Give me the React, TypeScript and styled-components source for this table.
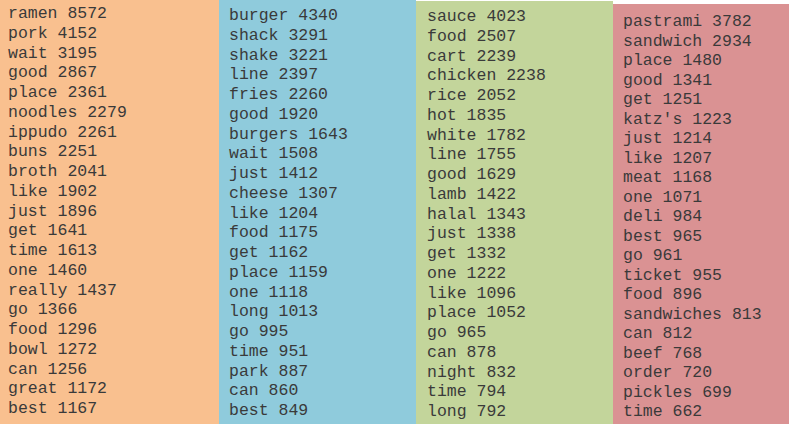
import * as React from 'react'
import styled, { createGlobalStyle } from 'styled-components'

const GlobalStyle = createGlobalStyle`
    html, body {
        margin: 0;
        padding: 0;
        background: #ffffff;
    }
`;

export const Board = styled.div`
    display: flex;
    align-items: stretch;
    height: 424px;
    width: 789px;
    overflow: hidden;
`;

export const Column = styled.div<{ $bg: string; $width: number; $top: number; $padTop: number; $padLeft: number; $lh: number }>`
    flex: 0 0 ${p => p.$width}px;
    margin-top: ${p => p.$top}px;
    padding: ${p => p.$padTop}px 0 0 ${p => p.$padLeft}px;
    box-sizing: border-box;
    background: ${p => p.$bg};
    color: #3a3a3a;
    font-family: "Liberation Mono", "Courier New", monospace;
    font-size: 16.5px;
    line-height: ${p => p.$lh}px;
`;

export const Word = styled.div`
    white-space: nowrap;
`;

const columns = [
    {
        bg: '#f9c08f', width: 219, top: 0, padTop: 4, padLeft: 8, lh: 19.75,
        words: ['ramen 8572', 'pork 4152', 'wait 3195', 'good 2867', 'place 2361', 'noodles 2279', 'ippudo 2261', 'buns 2251', 'broth 2041', 'like 1902', 'just 1896', 'get 1641', 'time 1613', 'one 1460', 'really 1437', 'go 1366', 'food 1296', 'bowl 1272', 'can 1256', 'great 1172', 'best 1167'],
    },
    {
        bg: '#8fcbdc', width: 197, top: 0, padTop: 6, padLeft: 10, lh: 19.75,
        words: ['burger 4340', 'shack 3291', 'shake 3221', 'line 2397', 'fries 2260', 'good 1920', 'burgers 1643', 'wait 1508', 'just 1412', 'cheese 1307', 'like 1204', 'food 1175', 'get 1162', 'place 1159', 'one 1118', 'long 1013', 'go 995', 'time 951', 'park 887', 'can 860', 'best 849'],
    },
    {
        bg: '#c3d59b', width: 197, top: 1, padTop: 6, padLeft: 11, lh: 19.75,
        words: ['sauce 4023', 'food 2507', 'cart 2239', 'chicken 2238', 'rice 2052', 'hot 1835', 'white 1782', 'line 1755', 'good 1629', 'lamb 1422', 'halal 1343', 'just 1338', 'get 1332', 'one 1222', 'like 1096', 'place 1052', 'go 965', 'can 878', 'night 832', 'time 794', 'long 792'],
    },
    {
        bg: '#da9293', width: 190, top: 4, padTop: 8, padLeft: 10, lh: 19.5,
        words: ['pastrami 3782', 'sandwich 2934', 'place 1480', 'good 1341', 'get 1251', "katz's 1223", 'just 1214', 'like 1207', 'meat 1168', 'one 1071', 'deli 984', 'best 965', 'go 961', 'ticket 955', 'food 896', 'sandwiches 813', 'can 812', 'beef 768', 'order 720', 'pickles 699', 'time 662'],
    },
];

export default function App() {
    return (
        <>
            <GlobalStyle />
            <Board>
                {columns.map((c, i) => (
                    <Column key={i} $bg={c.bg} $width={c.width} $top={c.top} $padTop={c.padTop} $padLeft={c.padLeft} $lh={c.lh}>
                        {c.words.map(w => <Word key={w}>{w}</Word>)}
                    </Column>
                ))}
            </Board>
        </>
    )
}
